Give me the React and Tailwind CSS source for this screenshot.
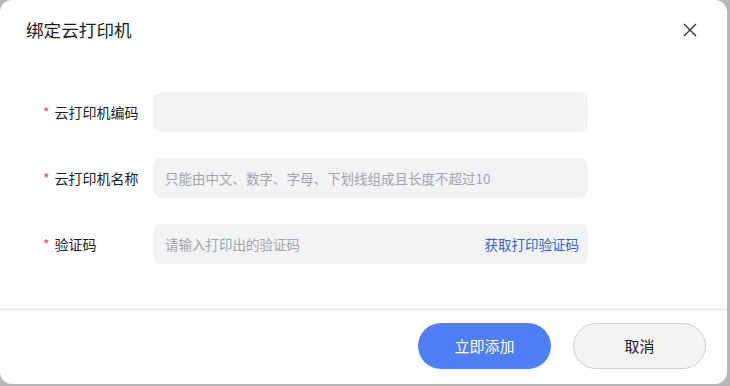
import React from "react";

const font = { fontFamily: '"Noto Sans CJK SC", "Noto Sans", sans-serif' };

function Row({ label, placeholder, link }) {
  return (
    <div className="flex items-center h-[40px]">
      <div className="w-[153px] flex items-center pl-[43px] text-[14px] text-[#222]">
        <span className="text-[#e5484d] mr-[5px] text-[14px] leading-none">*</span>
        <span>{label}</span>
      </div>
      <div className="w-[435px] h-[40px] rounded-[8px] bg-[#f2f3f5] flex items-center justify-between pl-[12px] pr-[9px] text-[13.5px]">
        <span className="text-[#a3a5aa]">{placeholder}</span>
        {link && <span className="text-[#3b5fd9]">{link}</span>}
      </div>
    </div>
  );
}

export default function App() {
  return (
    <div className="w-[730px] h-[386px] bg-[#b8b8b8]" style={font}>
      <div className="w-[727px] h-[384px] bg-white rounded-[12px] flex flex-col overflow-hidden">
        <div className="flex items-center justify-between h-[60px] pl-[26px] pr-[30px]">
          <span className="text-[17.6px] text-[#1d1d1f]">绑定云打印机</span>
          <svg width="14" height="14" viewBox="0 0 14 14" fill="none" stroke="#333" strokeWidth="1.4">
            <path d="M1 1L13 13M13 1L1 13" />
          </svg>
        </div>
        <div className="flex-1 flex flex-col gap-[26px] pt-[32px]">
          <Row label="云打印机编码" placeholder="" />
          <Row label="云打印机名称" placeholder="只能由中文、数字、字母、下划线组成且长度不超过10" />
          <Row label="验证码" placeholder="请输入打印出的验证码" link="获取打印验证码" />
        </div>
        <div className="h-[75px] border-t border-[#e6e6e6] shadow-[0_-3px_6px_rgba(0,0,0,0.03)] flex items-center justify-end gap-[22px] pr-[21px] pb-[2px]">
          <button className="w-[133px] h-[46px] rounded-full bg-[#4f7ff6] text-white text-[15px]">立即添加</button>
          <button className="w-[133px] h-[46px] rounded-full bg-[#f2f3f5] border border-[#cfcfcf] text-[#222] text-[15px]">取消</button>
        </div>
      </div>
    </div>
  );
}
